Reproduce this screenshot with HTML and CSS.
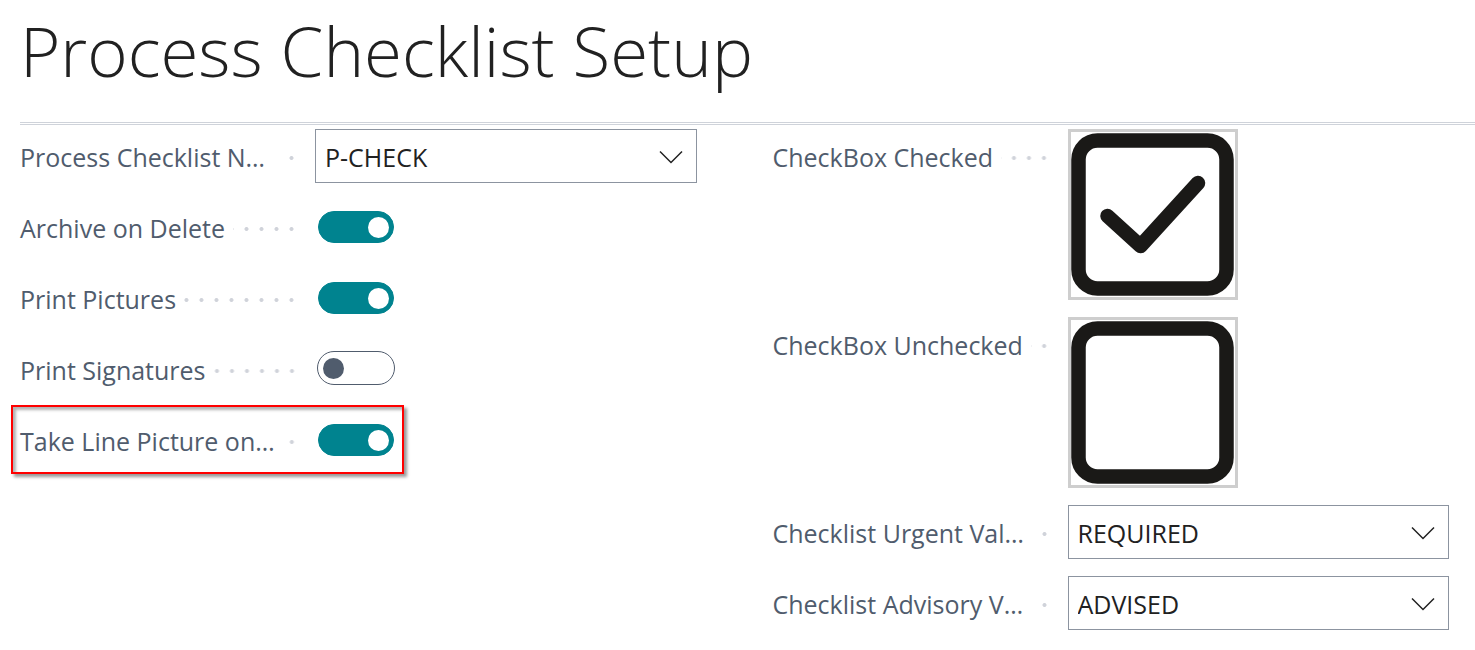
FILE: index.html
```
<!DOCTYPE html>
<html lang="en">
<head>
<meta charset="utf-8">
<meta name="viewport" content="width=device-width, initial-scale=1">
<title>Process Checklist Setup</title>
<link rel="stylesheet" href="styles.css">
</head>
<body>
<main class="page">
  <header class="page-header">
    <h1 class="page-title">Process Checklist Setup</h1>
  </header>
  <form class="fields">
    <div class="column">
      <div class="field">
        <div class="caption"><label class="label label-cut" for="nos">Process Checklist N…</label><span class="dots"></span></div>
        <div class="picker">
          <select class="select" id="nos"><option>P-CHECK</option></select>
          <svg class="chevron" viewBox="0 0 24 14" aria-hidden="true"><path d="M1 1.5 12 12.5 23 1.5"/></svg>
        </div>
      </div>
      <div class="field">
        <div class="caption"><label class="label" for="archive">Archive on Delete</label><span class="dots"></span></div>
        <input class="toggle" type="checkbox" role="switch" id="archive" checked>
      </div>
      <div class="field">
        <div class="caption"><label class="label" for="pictures">Print Pictures</label><span class="dots"></span></div>
        <input class="toggle" type="checkbox" role="switch" id="pictures" checked>
      </div>
      <div class="field">
        <div class="caption"><label class="label" for="signatures">Print Signatures</label><span class="dots"></span></div>
        <input class="toggle" type="checkbox" role="switch" id="signatures">
      </div>
      <div class="field field-marked">
        <div class="caption"><label class="label label-cut" for="line-picture">Take Line Picture on…</label><span class="dots"></span></div>
        <input class="toggle" type="checkbox" role="switch" id="line-picture" checked>
      </div>
    </div>
    <div class="column">
      <div class="field">
        <div class="caption"><span class="label">CheckBox Checked</span><span class="dots"></span></div>
        <div class="picture">
          <svg class="picture-art" viewBox="0 0 164 165" role="img" aria-label="Checked box">
            <rect x="7.5" y="8.5" width="148" height="148" rx="19"/>
            <path d="M36.5 84 69.500 114 127 51"/>
          </svg>
        </div>
      </div>
      <div class="field">
        <div class="caption"><span class="label">CheckBox Unchecked</span><span class="dots"></span></div>
        <div class="picture">
          <svg class="picture-art" viewBox="0 0 164 165" role="img" aria-label="Unchecked box">
            <rect x="7.5" y="8.5" width="148" height="148" rx="19"/>
          </svg>
        </div>
      </div>
      <div class="field">
        <div class="caption"><label class="label label-cut" for="urgent">Checklist Urgent Val…</label><span class="dots"></span></div>
        <div class="picker">
          <select class="select" id="urgent"><option>REQUIRED</option></select>
          <svg class="chevron" viewBox="0 0 24 14" aria-hidden="true"><path d="M1 1.5 12 12.5 23 1.5"/></svg>
        </div>
      </div>
      <div class="field">
        <div class="caption"><label class="label label-cut" for="advisory">Checklist Advisory V…</label><span class="dots"></span></div>
        <div class="picker">
          <select class="select" id="advisory"><option>ADVISED</option></select>
          <svg class="chevron" viewBox="0 0 24 14" aria-hidden="true"><path d="M1 1.5 12 12.5 23 1.5"/></svg>
        </div>
      </div>
    </div>
  </form>
</main>
</body>
</html>
```
FILE: styles.css
```
*,
*::before,
*::after {
  box-sizing: border-box;
}

body {
  margin: 0;
  background: #fff;
  color: #212121;
  font-family: "Open Sans", "Noto Sans", sans-serif;
  font-size: 25px;
}

.page {
  padding-left: 20px;
}

.page-header {
  padding-bottom: 22px;
  border-bottom: 3px double #cfd3da;
}

.page-title {
  margin: 0;
  font-size: 69px;
  font-weight: 300;
  line-height: 100px;
}

.fields {
  display: grid;
  grid-template-columns: 1fr 1fr;
  gap: 76px;
  padding: 4px 26px 20px 0;
}

.column {
  display: flex;
  flex-direction: column;
  gap: 17px;
}

.field {
  position: relative;
  display: flex;
  align-items: flex-start;
}

.caption {
  display: flex;
  flex: none;
  align-items: center;
  width: 295px;
  height: 54px;
  padding-right: 16px;
  padding-top: 3px;
}

.label {
  flex: none;
  padding-right: 8px;
  padding-bottom: 2px;
  color: #505c6d;
  line-height: 34px;
  white-space: nowrap;
}

.label-cut {
  min-width: 262px;
}

.dots {
  flex: 1;
  height: 6px;
  background: radial-gradient(circle, #d0d3da 0 1.5px, transparent 2.5px) right center / 15px 6px repeat-x;
}

.picker {
  position: relative;
  flex: 1;
}

.select {
  display: block;
  width: 100%;
  height: 54px;
  padding: 2px 48px 0 9px;
  border: 1px solid #8c94a0;
  border-radius: 0;
  appearance: none;
  background: #fff;
  color: #212121;
  font: inherit;
}

.chevron {
  position: absolute;
  top: 21px;
  right: 14px;
  width: 24px;
  height: 14px;
  fill: none;
  stroke: #212121;
  stroke-width: 1.5;
  pointer-events: none;
}

.toggle {
  display: flex;
  align-items: center;
  width: 78px;
  height: 34px;
  margin: 9px 0 11px 2px;
  padding: 0 5px;
  border: 1px solid #505c6d;
  border-radius: 17px;
  appearance: none;
  background: #fff;
}

.toggle::before {
  width: 21px;
  height: 21px;
  border-radius: 50%;
  background: #505c6d;
  content: "";
}

.toggle:checked {
  justify-content: flex-end;
  width: 76px;
  height: 32px;
  margin: 11px 0 11px 3px;
  padding: 0 4px;
  border-color: #00838f;
  background: #00838f;
}

.toggle:checked::before {
  background: #fff;
}

.field-marked::after {
  position: absolute;
  top: -8px;
  left: -9px;
  width: 393px;
  height: 69px;
  border: 2px solid #f00;
  box-shadow: 3px 3px 3px rgba(0, 0, 0, 0.4), inset 3px 3px 3px rgba(0, 0, 0, 0.3);
  pointer-events: none;
  content: "";
}

.picture {
  width: 170px;
  height: 171px;
  border: 3px solid #cecece;
}

.picture-art {
  display: block;
  width: 164px;
  height: 165px;
  fill: none;
  stroke: #1a1917;
  stroke-width: 14.5;
  stroke-linecap: round;
  stroke-linejoin: round;
}
```
